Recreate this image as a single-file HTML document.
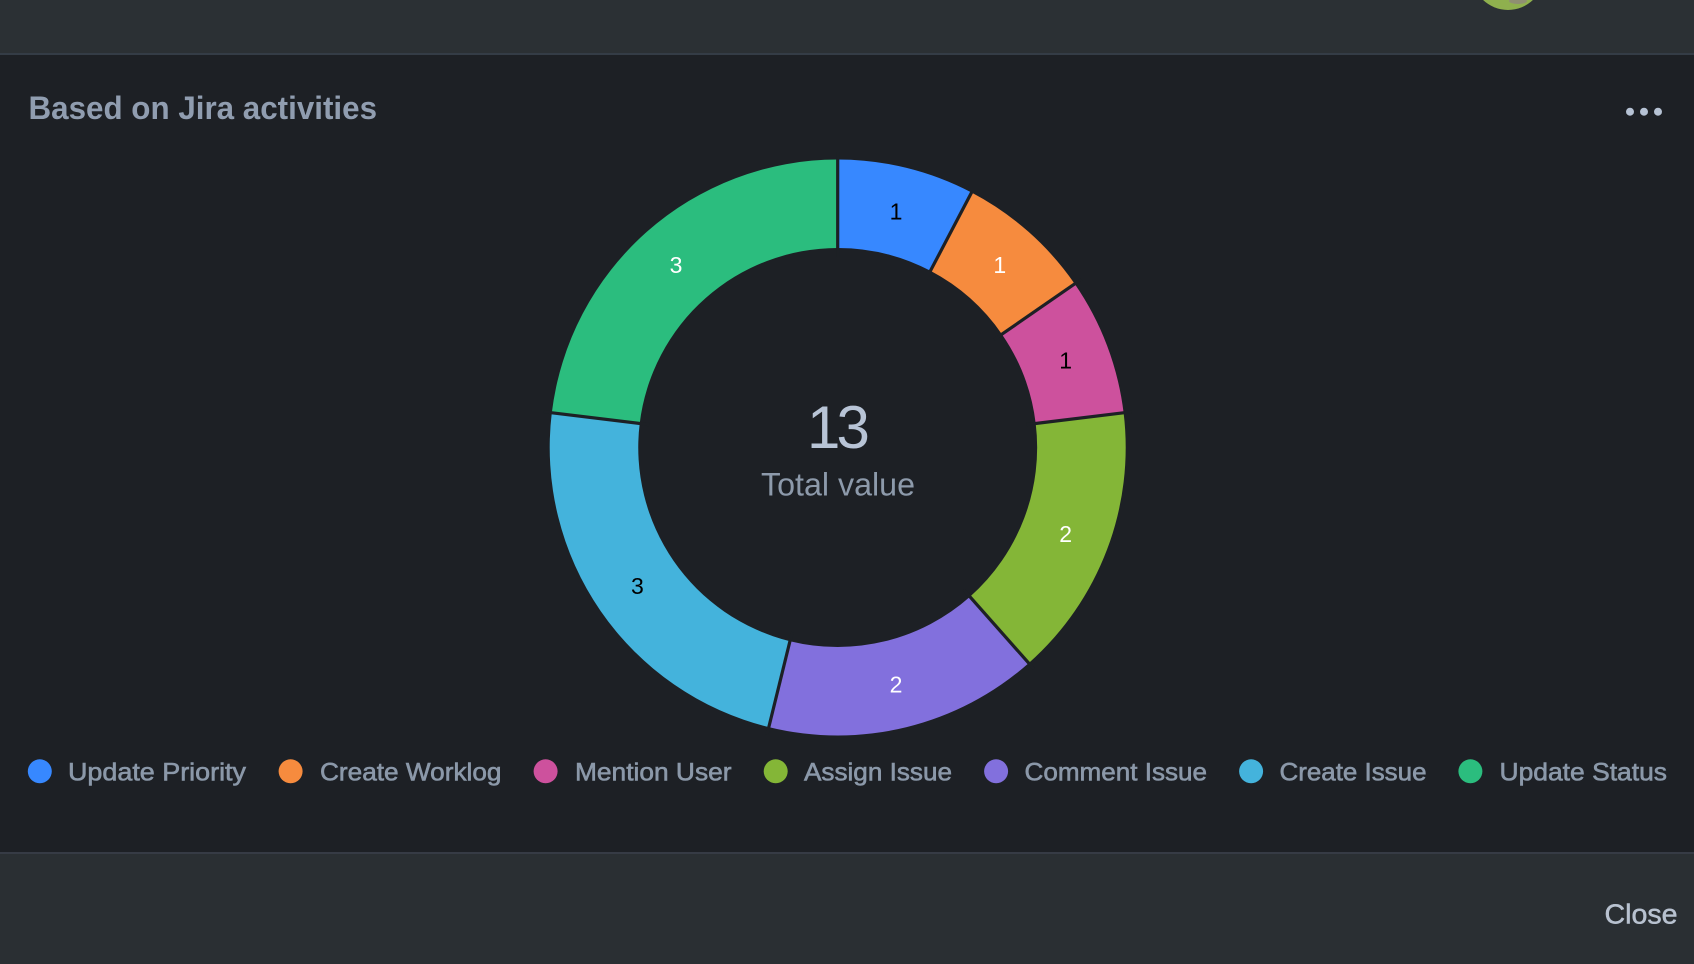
<!DOCTYPE html>
<html lang="en">
<head>
<meta charset="utf-8">
<title>Based on Jira activities</title>
<style>
html,body{margin:0;padding:0;width:1694px;height:964px;overflow:hidden;background:#1d2025}
svg{display:block;font-family:"Liberation Sans",Arial,sans-serif}
.leg{font-size:25px;fill:#8b98a9;stroke:#8b98a9;stroke-width:.6px}
.lab{font-size:23px;text-anchor:middle}
</style>
</head>
<body>
<svg width="1694" height="964" viewBox="0 0 1694 964" xmlns="http://www.w3.org/2000/svg">
  <rect width="1694" height="964" fill="#1d2025"/>
  <rect width="1694" height="54" fill="#2b3034"/>
  <rect y="53" width="1694" height="2" fill="#343c46"/>
  <rect y="853" width="1694" height="111" fill="#2a2f33"/>
  <rect y="852" width="1694" height="2" fill="#363b45"/>

  <circle cx="1508" cy="-26" r="36" fill="#8fb04e"/>
  <ellipse cx="1518" cy="1" rx="9" ry="3" fill="#8f8f72"/>

  <text x="28.5" y="119" font-size="32" font-weight="700" fill="#909db0" textLength="348.5" lengthAdjust="spacingAndGlyphs">Based on Jira activities</text>

  <circle cx="1630" cy="111.7" r="4" fill="#b6c2d4"/>
  <circle cx="1644" cy="111.7" r="4" fill="#b6c2d4"/>
  <circle cx="1658" cy="111.7" r="4" fill="#b6c2d4"/>

  <g transform="translate(837.7,447.5)">
    <path fill="#3788ff" d="M0 -288A288 288 0 0 1 133.8 -255L92.7 -176.7A199.5 199.5 0 0 0 0 -199.5Z"/>
    <path fill="#f68b3e" d="M133.8 -255A288 288 0 0 1 237 -163.6L164.2 -113.3A199.5 199.5 0 0 0 92.7 -176.7Z"/>
    <path fill="#cd519d" d="M237 -163.6A288 288 0 0 1 285.9 -34.7L198 -24A199.5 199.5 0 0 0 164.2 -113.3Z"/>
    <path fill="#84b637" d="M285.9 -34.7A288 288 0 0 1 191 215.6L132.3 149.3A199.5 199.5 0 0 0 198 -24Z"/>
    <path fill="#8270dd" d="M191 215.6A288 288 0 0 1 -68.9 279.6L-47.7 193.7A199.5 199.5 0 0 0 132.3 149.3Z"/>
    <path fill="#44b3dc" d="M-68.9 279.6A288 288 0 0 1 -285.9 -34.7L-198 -24A199.5 199.5 0 0 0 -47.7 193.7Z"/>
    <path fill="#2bbd7e" d="M-285.9 -34.7A288 288 0 0 1 0 -288L0 -199.5A199.5 199.5 0 0 0 -198 -24Z"/>
    <g stroke="#1d2025" stroke-width="3.2">
      <line x1="0" y1="-190" x2="0" y2="-296"/>
      <line x1="88.3" y1="-168.2" x2="137.6" y2="-262.1"/>
      <line x1="156.4" y1="-107.9" x2="243.6" y2="-168.2"/>
      <line x1="188.6" y1="-22.9" x2="293.8" y2="-35.7"/>
      <line x1="126" y1="142.2" x2="196.3" y2="221.6"/>
      <line x1="-45.5" y1="184.5" x2="-70.8" y2="287.4"/>
      <line x1="-188.6" y1="-22.9" x2="-293.8" y2="-35.7"/>
    </g>
  </g>

  <text class="lab" x="896" y="219.5" fill="#000">1</text>
  <text class="lab" x="999.8" y="273" fill="#fff">1</text>
  <text class="lab" x="1065.6" y="368.5" fill="#000">1</text>
  <text class="lab" x="1065.6" y="542" fill="#fff">2</text>
  <text class="lab" x="896" y="692.5" fill="#fff">2</text>
  <text class="lab" x="637.4" y="594" fill="#000">3</text>
  <text class="lab" x="676" y="273" fill="#fff">3</text>

  <text x="807 836.5" y="448" font-size="60" fill="#b8c4d6">13</text>
  <text x="761" y="495.7" font-size="32" fill="#8d9aab" textLength="154" lengthAdjust="spacingAndGlyphs">Total value</text>

  <circle cx="39.8" cy="771.3" r="12" fill="#3788ff"/>
  <text class="leg" x="68" y="780.5" textLength="178" lengthAdjust="spacingAndGlyphs">Update Priority</text>
  <circle cx="290.6" cy="771.3" r="12" fill="#f68b3e"/>
  <text class="leg" x="320" y="780.5" textLength="181.5" lengthAdjust="spacingAndGlyphs">Create Worklog</text>
  <circle cx="545.6" cy="771.3" r="12" fill="#cd519d"/>
  <text class="leg" x="575" y="780.5" textLength="156.5" lengthAdjust="spacingAndGlyphs">Mention User</text>
  <circle cx="775.7" cy="771.3" r="12" fill="#84b637"/>
  <text class="leg" x="804" y="780.5" textLength="148" lengthAdjust="spacingAndGlyphs">Assign Issue</text>
  <circle cx="996.1" cy="771.3" r="12" fill="#8270dd"/>
  <text class="leg" x="1024.5" y="780.5" textLength="182.5" lengthAdjust="spacingAndGlyphs">Comment Issue</text>
  <circle cx="1251.1" cy="771.3" r="12" fill="#44b3dc"/>
  <text class="leg" x="1279.5" y="780.5" textLength="147" lengthAdjust="spacingAndGlyphs">Create Issue</text>
  <circle cx="1470.4" cy="771.3" r="12" fill="#2bbd7e"/>
  <text class="leg" x="1499.5" y="780.5" textLength="167.5" lengthAdjust="spacingAndGlyphs">Update Status</text>

  <text x="1604.5" y="923.3" font-size="28" fill="#b8c2d0" stroke="#b8c2d0" stroke-width=".5" textLength="73" lengthAdjust="spacingAndGlyphs">Close</text>
</svg>
</body>
</html>
